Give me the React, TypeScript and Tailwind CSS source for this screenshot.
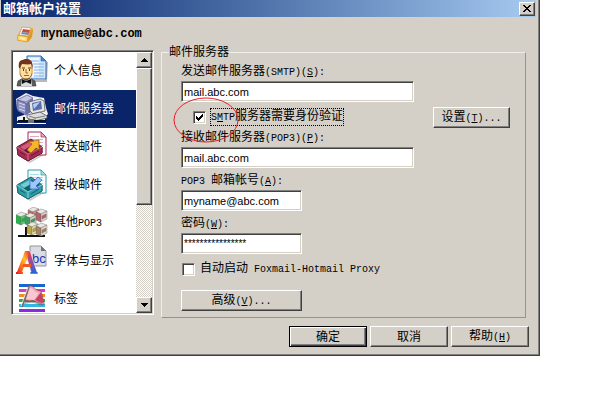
import React, { useState } from "react";

const raised =
  "bg-[#d4d0c8] border border-t-white border-l-white border-r-[#404040] border-b-[#404040] shadow-[inset_-1px_-1px_0_#808080]";
const sunken =
  "border border-t-[#808080] border-l-[#808080] border-r-white border-b-white shadow-[inset_1px_1px_0_#404040,inset_-1px_-1px_0_#d4d0c8]";

function Latin({ children }: { children: React.ReactNode }) {
  return (
    <span className="whitespace-pre font-['Liberation_Mono',monospace] text-[10px]">{children}</span>
  );
}

function Key({ letter }: { letter: string }) {
  return (
    <Latin>
      (<span className="underline underline-offset-1">{letter}</span>)
    </Latin>
  );
}

function Button({
  children,
  className = "",
  primary = false,
}: {
  children: React.ReactNode;
  className?: string;
  primary?: boolean;
}) {
  const look = primary
    ? "bg-[#d4d0c8] border border-black shadow-[inset_1px_1px_0_#ffffff,inset_-1px_-1px_0_#404040,inset_-2px_-2px_0_#808080]"
    : raised;
  return (
    <button type="button" className={`h-[21px] shrink-0 leading-[18px] ${look} ${className}`}>
      {children}
    </button>
  );
}

function Field({
  id,
  label,
  value,
  className,
}: {
  id: string;
  label: React.ReactNode;
  value: string;
  className: string;
}) {
  return (
    <div className="flex flex-col gap-[3px]">
      <label htmlFor={id} className="h-[14px] leading-[14px]">
        {label}
      </label>
      <input
        id={id}
        type="text"
        defaultValue={value}
        className={`h-[21px] max-w-full rounded-none bg-white px-0.5 font-['Liberation_Sans',sans-serif] text-black outline-none ${sunken} ${className}`}
      />
    </div>
  );
}

function Check({
  id,
  initial,
  focused = false,
  children,
}: {
  id: string;
  initial: boolean;
  focused?: boolean;
  children: React.ReactNode;
}) {
  const [on, setOn] = useState(initial);
  return (
    <div className="flex items-center gap-1">
      <span className="relative block h-[13px] w-[13px]">
        <input
          id={id}
          type="checkbox"
          checked={on}
          onChange={() => setOn(!on)}
          className={`block h-[13px] w-[13px] appearance-none bg-white ${sunken}`}
        />
        {on && (
          <svg
            className="pointer-events-none absolute inset-0"
            width="13"
            height="13"
            shapeRendering="crispEdges"
            aria-hidden="true"
          >
            <path d="M3 5h1v1h1v1h1V6h1V5h1V4h1V3h1v3H9v1H8v1H7v1H6v1H5V9H4V8H3z" />
          </svg>
        )}
      </span>
      <label
        htmlFor={id}
        className={`border border-dotted leading-[14px] ${focused ? "border-black" : "border-transparent"}`}
      >
        {children}
      </label>
    </div>
  );
}

function Paper({ tint, edge }: { tint: string; edge: string }) {
  return (
    <g>
      <path d="M12 1h13l5 5v18H12z" fill="#fbfcff" stroke={edge} />
      <path d="M25 1v5h5z" fill={tint} stroke={edge} strokeWidth=".7" />
      <path d="M14 5.5h9M14 8.500h13M14 11.500h13M14 14.500h13M14 17.500h13M14 20.500h13" stroke={tint} />
    </g>
  );
}

function PersonIcon() {
  return (
    <svg width="32" height="32" viewBox="0 0 32 32">
      <path d="M13 26h17l1-19" fill="none" stroke="#8b8b8b" strokeWidth="2" opacity=".6" />
      <path d="M11 1h14l5 5v18H11z" fill="#cfe6fb" stroke="#2c66b0" />
      <path d="M13 3h10v19H13z" fill="#eef7ff" />
      <path d="M25 1v5h5z" fill="#4c8bd6" stroke="#2c66b0" strokeWidth=".6" />
      <path d="M15 6h8M17 9h11M18 12h10M18 15h10M18 18h10M18 21h10" stroke="#86b4e4" />
      <path d="M1 31l1-5 5-3h7l5 3 1 5z" fill="#5b5b5b" stroke="#333" strokeWidth=".6" />
      <path d="M6 23l4 3 5-3 1 8H5z" fill="#d9dde0" />
      <path d="M6 24l4 2 5-2v5l-5-2-4 2z" fill="#111" />
      <path d="M4 11c0-4 3-6 7-6 3 0 5 2 5 6v6c0 4-2 7-6 7s-6-3-6-7z" fill="#ffdf9c" stroke="#6b3f1b" strokeWidth=".8" />
      <path d="M3 13c-1-6 1-8 4-8 2-2 9-1 9 3l1 5-2-4c-3 1-6 0-9 0l-2 4z" fill="#70341f" />
      <path d="M3 14h2v4H3zM15 14h2v4h-2z" fill="#f2bd75" />
      <path d="M6 13h3M12 13h3" stroke="#5a341c" />
      <path d="M7 15h1M13 15h1" stroke="#111" strokeWidth="1.4" />
      <path d="M10 14v4h2M8 20.500h5" fill="none" stroke="#a3622d" />
    </svg>
  );
}

function ServerIcon() {
  return (
    <svg width="32" height="32" viewBox="0 0 32 32">
      <path d="M0 6l10-6 7 3 11 2 2 10 2 6-3 3v4H1v-4l7-2v-2l-7-4z" fill="#eef0f8" />
      <path d="M1 7l10-5 6 3-7 4z" fill="#c3c6e6" stroke="#56597f" strokeWidth=".7" />
      <path d="M1 7l9 3v12l-8-4z" fill="#8b90c4" stroke="#4e5281" strokeWidth=".7" />
      <path d="M10 10l7-5v13l-7 4z" fill="#6a70a6" />
      <path d="M3 10l6 2M3 13l6 2M3 16l6 2" stroke="#d4d7f2" />
      <path d="M13 9l11-3 4 2 1 10-12 3-3-3z" fill="#e4e3de" stroke="#555a62" strokeWidth=".8" />
      <path d="M16 10l9-2 1 8-9 2z" fill="#586dad" />
      <path d="M17 11l7-2-6 7z" fill="#b8cff5" />
      <path d="M11 22l13-3 7 4v2l-12 3-8-3z" fill="#dcdcd8" stroke="#50545e" strokeWidth=".8" />
      <path d="M13 23l6 2 10-2M19 27v-2" fill="none" stroke="#777c88" />
      <path d="M2 28h28" stroke="#111" strokeWidth="2" />
      <path d="M8 24v3" stroke="#111" strokeWidth="2" />
      <path d="M12 26h6v4h-6z" fill="#777" />
      <path d="M1 30.500h29" stroke="#fff" />
    </svg>
  );
}

function TrayIcon({ incoming }: { incoming: boolean }) {
  const c = incoming
    ? { dark: "#0f626c", mid: "#2f9ba5", light: "#72ccd0", line: "#a3dfe4" }
    : { dark: "#681633", mid: "#a62b51", light: "#d15d7d", line: "#dfaabd" };
  return (
    <svg width="32" height="32" viewBox="0 0 32 32">
      <path d="M5 25l9 5 14-9v3l-14 8z" fill="#999" opacity=".5" />
      <Paper tint={c.line} edge={c.mid} />
      <path d="M1 16L15 8l11 8v6l-14 8L2 24z" fill={c.mid} stroke={c.dark} />
      <path d="M4 16l11-6 9 6-12 7z" fill={c.dark} />
      <path d="M4 16l11-6v5L8 19z" fill={c.light} />
      <path d="M1 16l11 7 14-7v6l-14 8-10-6z" fill={c.mid} stroke={c.dark} strokeWidth=".7" />
      <path d="M1 16l11 7v6M12 23l14-7" fill="none" stroke={c.light} strokeWidth="1.300" />
      <path d="M4 21l5 3M15 25l8-5" stroke={c.dark} />
      {incoming ? (
        <path d="M14 20V11l3 2 5-5 4 3-6 6 3 3z" fill="#9cc8ff" stroke="#3f69bd" strokeWidth=".8" />
      ) : (
        <path d="M12 11l11-2v10l-3-2-5 5-4-3 5-6z" fill="#f7b52b" stroke="#9c610c" strokeWidth=".8" />
      )}
    </svg>
  );
}

function Monitor({ x, y, side, light }: { x: number; y: number; side: string; light: string }) {
  return (
    <g transform={`translate(${x} ${y})`} stroke="#666" strokeWidth=".4">
      <path d="M0 3l5-3 6 2-6 3z" fill="#e9e7e2" />
      <path d="M0 3l5 2v8l-5-2z" fill={side} />
      <path d="M5 5l6-3v8l-6 3z" fill={light} />
      <path d="M6 7l4-2v3l-4 2z" fill={side} />
    </g>
  );
}

function PopIcon() {
  return (
    <svg width="32" height="32" viewBox="0 0 32 32">
      <path d="M2 29h27M10 20v9" stroke="#111" strokeWidth="2" />
      <Monitor x={12} y={0} side="#c76868" light="#d98f8f" />
      <Monitor x={0} y={5} side="#23b548" light="#4fd36d" />
      <Monitor x={9} y={6} side="#3f9a5c" light="#d0dccb" />
      <Monitor x={20} y={2} side="#b3636a" light="#e2cccc" />
      <Monitor x={11} y={15} side="#bfa640" light="#f0e394" />
      <Monitor x={20} y={16} side="#a5836a" light="#e6d8c4" />
    </svg>
  );
}

function FontIcon() {
  return (
    <svg width="32" height="32" viewBox="0 0 32 32">
      <defs>
        <linearGradient id="legLeft" x1="1" y1="0" x2="0" y2="1">
          <stop offset="0" stopColor="#f2382c" />
          <stop offset=".35" stopColor="#ffc12c" />
          <stop offset=".6" stopColor="#ff7a1c" />
          <stop offset="1" stopColor="#e5122b" />
        </linearGradient>
        <linearGradient id="legRight" x1="0" y1="0" x2="0" y2="1">
          <stop offset="0" stopColor="#f2382c" />
          <stop offset=".45" stopColor="#a04aa8" />
          <stop offset="1" stopColor="#1668dc" />
        </linearGradient>
      </defs>
      <path d="M14 1h11l5 5v15H14z" fill="#dadbe3" stroke="#92939c" />
      <path d="M25 1v5h5z" fill="#6f7078" />
      <text x="16" y="18" fill="#2535b0" className="font-['Liberation_Sans',sans-serif] text-[13px]">
        bc
      </text>
      <path d="M9 6h5l7 21h1v2h-8v-2h1l-4-14z" fill="url(#legRight)" stroke="#fff" strokeWidth=".5" />
      <path d="M9 6h4l-1 6-6 15h1v2H0v-2h1z" fill="url(#legLeft)" />
      <path d="M7 19h8v3H6z" fill="#ee5a20" />
    </svg>
  );
}

function FlagIcon() {
  return (
    <svg width="32" height="32" viewBox="0 0 32 32">
      <g strokeWidth="3">
        <path d="M3 2.500h26" stroke="#1767cf" />
        <path d="M3 7.500h26" stroke="#dc38cf" />
        <path d="M3 12.500h26" stroke="#f08d25" />
        <path d="M3 17.500h26" stroke="#43a52c" />
        <path d="M3 22.500h26" stroke="#32b5df" />
        <path d="M3 27.500h26" stroke="#8a2be2" />
      </g>
      <path d="M14 6c5-2 7 3 11 5l4 10c-5 4-9-3-15-1l-6 1z" fill="#555" opacity=".5" />
      <path d="M13 3c5-1 6 5 12 5l3 11c-6 4-9-4-14-1l-5-1z" fill="#f0a5b5" stroke="#8a3f50" strokeWidth=".6" />
      <path d="M14 5c3 0 5 5 9 5l-5 7-8-1z" fill="#f8c8d1" />
      <path d="M25 9l3 10c-4 2-7-1-9-2z" fill="#c44464" />
      <path d="M13 3L6 24" stroke="#7c6a72" strokeWidth="2" />
      <path d="M12 4L5 23" stroke="#fff" strokeWidth=".7" />
    </svg>
  );
}

function AccountIcon() {
  return (
    <svg width="17" height="17" viewBox="0 0 17 17" aria-hidden="true">
      <path d="M5 1l11 1-1 9-4 5-11-2 1-5z" fill="#f0b93b" />
      <path d="M5 1l9 1-3 8-9-1z" fill="#f7f5f1" stroke="#bd8f42" strokeWidth=".6" />
      <path d="M6 3l7 1-1 3-7-1z" fill="#d8463b" />
      <path d="M5 6l7 1-1 2-7-1z" fill="#6b8dc5" />
      <path d="M1 9l10 2-1 5-10-2z" fill="#ffd863" stroke="#cc8819" strokeWidth=".6" />
      <path d="M11 11l4-8 1 1-1 7-4 5z" fill="#d99a2c" />
      <path d="M3 11l5 1v2l-5-1z" fill="#fff0af" />
    </svg>
  );
}

const pages = [
  { name: <>个人信息</>, icon: <PersonIcon /> },
  { name: <>邮件服务器</>, icon: <ServerIcon /> },
  { name: <>发送邮件</>, icon: <TrayIcon incoming={false} /> },
  { name: <>接收邮件</>, icon: <TrayIcon incoming /> },
  { name: <>其他<Latin>POP3</Latin></>, icon: <PopIcon /> },
  { name: <>字体与显示</>, icon: <FontIcon /> },
  { name: <>标签</>, icon: <FlagIcon /> },
];

function ScrollButton({ label, path }: { label: string; path: string }) {
  return (
    <button
      type="button"
      aria-label={label}
      className={`flex h-4 w-4 shrink-0 items-center justify-center ${raised}`}
    >
      <svg width="7" height="4" shapeRendering="crispEdges">
        <path d={path} />
      </svg>
    </button>
  );
}

function PageList() {
  const [current, setCurrent] = useState(1);
  return (
    <nav className={`mt-[5px] flex h-[265px] w-[143px] shrink-0 bg-white p-px ${sunken}`}>
      <ul className="min-w-0 flex-1 overflow-hidden">
        {pages.map((page, i) => (
          <li key={i}>
            <button
              type="button"
              onClick={() => setCurrent(i)}
              className={`flex h-[38px] w-full items-center gap-[6px] pl-[3px] text-left ${
                i === current ? "bg-[#0a246a] text-white" : "bg-white"
              }`}
            >
              {page.icon}
              <span>{page.name}</span>
            </button>
          </li>
        ))}
      </ul>
      <div className="flex w-4 flex-col bg-[repeating-conic-gradient(#ffffff_0_25%,#d4d0c8_0_50%)] bg-[length:2px_2px]">
        <ScrollButton label="向上" path="M3 0h1v1h1v1h1v1h1v1H0V3h1V2h1V1h1z" />
        <div className={`h-[137px] ${raised}`} />
        <div className="flex-1" />
        <ScrollButton label="向下" path="M0 0h7v1H6v1H5v1H4v1H3V3H2V2H1V1H0z" />
      </div>
    </nav>
  );
}

export default function App() {
  return (
    <main className="min-h-screen bg-white pr-[70px] font-['Liberation_Sans','Noto_Sans_CJK_SC',sans-serif] text-[12px] leading-[14px] text-black">
      <section
        aria-labelledby="dialog-title"
        className="border-r border-b border-[#404040] bg-[#d4d0c8] shadow-[inset_-1px_-1px_0_#808080]"
      >
        <header className="mr-[3px] ml-px flex h-[17px] items-center justify-between bg-linear-to-r from-[#0a246a] to-[#a6caf0] pr-px pl-0.5">
          <h1 id="dialog-title" className="text-[13px] leading-[16px] font-bold text-white">
            邮箱帐户设置
          </h1>
          <button
            type="button"
            aria-label="关闭"
            className={`flex h-[14px] w-4 items-center justify-center ${raised}`}
          >
            <svg width="8" height="7" shapeRendering="crispEdges">
              <path d="M0 0h2v1h1v1h2V1h1V0h2v1H7v1H6v1H5v1h1v1h1v1h1v1H6V6H5V5H3v1H2v1H0V6h1V5h1V4h1V3H2V2H1V1H0z" />
            </svg>
          </button>
        </header>

        <div className="flex h-7 items-center gap-[7px] pt-[6px] pl-[17px]">
          <AccountIcon />
          <span className="font-['Liberation_Mono',monospace] font-bold">myname@abc.com</span>
        </div>

        <div className="flex items-start gap-[7px] pr-[13px] pl-[11px]">
          <PageList />

          <fieldset className="min-w-0 flex-1 border border-t-[#f0eeea] border-r-[#96938e] border-b-[#96938e] border-l-[#f0eeea] pr-[15px] pb-[6px] pl-[19px]">
            <legend className="-ml-3 h-[14px]">邮件服务器</legend>
            <div className="flex flex-col gap-[5px] pt-[5px]">
              <Field
                id="smtp"
                label={<>发送邮件服务器<Latin>(SMTP)</Latin><Key letter="S" /><Latin>:</Latin></>}
                value="mail.abc.com"
                className="w-[233px] text-[11px]"
              />
              <div className="relative flex h-[18px] items-start justify-between pl-3">
                <div className="flex h-5 items-center">
                  <Check id="auth" initial focused>
                    <Latin>
                      S<span className="underline underline-offset-1">M</span>TP
                    </Latin>
                    服务器需要身份验证
                  </Check>
                </div>
                <Button className="w-[77px]">
                  设置<Key letter="T" />
                  <Latin>...</Latin>
                </Button>
                <svg
                  className="pointer-events-none absolute -top-[10px] -left-2"
                  width="66"
                  height="46"
                  aria-hidden="true"
                >
                  <ellipse cx="33" cy="23" rx="32" ry="22" fill="none" stroke="#ed1c24" strokeWidth="1" />
                </svg>
              </div>
              <Field
                id="pop"
                label={<>接收邮件服务器<Latin>(POP3)</Latin><Key letter="P" /><Latin>:</Latin></>}
                value="mail.abc.com"
                className="w-[233px] text-[11px]"
              />
              <Field
                id="account"
                label={<><Latin>POP3 </Latin>邮箱帐号<Key letter="A" /><Latin>:</Latin></>}
                value="myname@abc.com"
                className="w-[121px] text-[11px]"
              />
              <Field
                id="password"
                label={<>密码<Key letter="W" /><Latin>:</Latin></>}
                value="****************"
                className="w-[121px] text-[10px]"
              />
              <div className="flex h-5 items-center pl-px">
                <Check id="proxy" initial={false}>
                  自动启动<Latin> Foxmail-Hotmail Proxy</Latin>
                </Check>
              </div>
              <Button className="mt-[6px] w-[121px]">
                高级<Key letter="V" />
                <Latin>...</Latin>
              </Button>
            </div>
          </fieldset>
        </div>

        <footer className="flex justify-end gap-[3px] pt-2 pr-[10px] pb-2">
          <Button primary className="w-[78px]">确定</Button>
          <Button className="w-[78px]">取消</Button>
          <Button className="w-[78px]">
            帮助<Key letter="H" />
          </Button>
        </footer>
      </section>
    </main>
  );
}
